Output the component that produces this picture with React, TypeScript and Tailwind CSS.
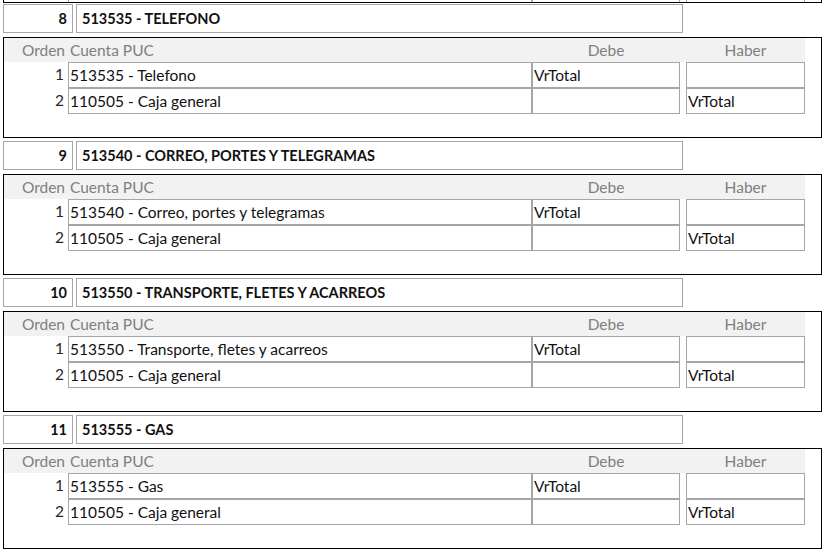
const records = [
  { n: 8, code: "513535", title: "TELEFONO", name: "Telefono" },
  { n: 9, code: "513540", title: "CORREO, PORTES Y TELEGRAMAS", name: "Correo, portes y telegramas" },
  { n: 10, code: "513550", title: "TRANSPORTE, FLETES Y ACARREOS", name: "Transporte, fletes y acarreos" },
  { n: 11, code: "513555", title: "GAS", name: "Gas" },
];

function Row({ orden, cuenta, debe, haber }: { orden: number; cuenta: string; debe: string; haber: string }) {
  return (
    <div className="flex h-[26px]">
      <div className="w-[64px] pr-[4px] text-right leading-[24px] text-[#262626]">{orden}</div>
      <div className="w-[464px] border border-[#a6a6a6] pl-[1px] leading-[24px]">{cuenta}</div>
      <div className="w-[148px] border border-[#a6a6a6] pl-[1px] leading-[24px]">{debe}</div>
      <div className="ml-[6px] w-[119px] border border-[#a6a6a6] pl-[1px] leading-[24px]">{haber}</div>
    </div>
  );
}

function Record({ n, code, title, name }: (typeof records)[number]) {
  return (
    <div className="pt-[1px] pb-[2px]">
      <div className="flex h-[29px] gap-[3px] pl-[3px] text-[14.5px] font-bold">
        <div className="w-[70px] border border-[#a6a6a6] pr-[5px] text-right leading-[27px]">{n}</div>
        <div className="w-[607px] border border-[#a6a6a6] pl-[5px] leading-[27px]">
          {code} - {title}
        </div>
      </div>
      <div className="mt-[4px] ml-[3px] h-[101px] w-[819px] border border-black">
        <div className="flex h-[24px] w-[801px] bg-[#f2f2f2] leading-[24px] text-[#7f7f7f]">
          <div className="w-[64px] pr-[3px] text-right">Orden</div>
          <div className="w-[464px] pl-[2px]">Cuenta PUC</div>
          <div className="w-[148px] text-center">Debe</div>
          <div className="ml-[6px] w-[119px] text-center">Haber</div>
        </div>
        <Row orden={1} cuenta={`${code} - ${name}`} debe="VrTotal" haber="" />
        <Row orden={2} cuenta="110505 - Caja general" debe="" haber="VrTotal" />
      </div>
    </div>
  );
}

export default function App() {
  return (
    <div className="h-[553px] w-[829px] overflow-hidden bg-white font-['Lato',sans-serif] text-[15.5px] text-[#111]">
      {/* tail of the previous record */}
      <div className="ml-[3px] flex h-[3px] w-[819px] border-x border-b border-black">
        <div className="ml-[64px] w-[464px] border-x border-[#a6a6a6]" />
        <div className="w-[148px] border-x border-[#a6a6a6]" />
        <div className="ml-[6px] w-[119px] border-x border-[#a6a6a6]" />
      </div>
      {records.map((r) => (
        <Record key={r.n} {...r} />
      ))}
    </div>
  );
}
